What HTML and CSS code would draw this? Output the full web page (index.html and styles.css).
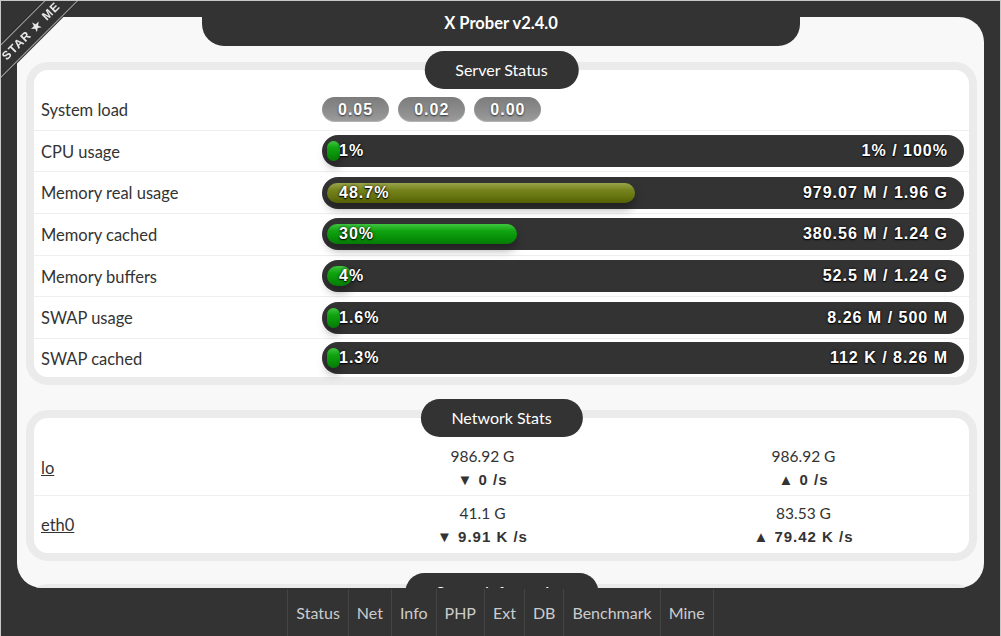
FILE: index.html
```html
<!DOCTYPE html>
<html lang="en">
<head>
<meta charset="utf-8">
<title>X Prober v2.4.0</title>
<link rel="stylesheet" href="styles.css">
</head>
<body>
<div class="ribbon"><div class="ribbon-band">STAR ★ ME</div></div>
<header class="app-title">X Prober v2.4.0</header>

<main class="main">
  <section class="card card-status">
    <h2 class="card-title">Server Status</h2>
    <div class="row">
      <div class="label">System load</div>
      <div class="value loads">
        <span class="load">0.05</span><span class="load">0.02</span><span class="load">0.00</span>
      </div>
    </div>
    <div class="row">
      <div class="label">CPU usage</div>
      <div class="value"><div class="bar"><div class="fill green" style="width:1%"></div><div class="bar-text"><span>1%</span><span>1% / 100%</span></div></div></div>
    </div>
    <div class="row">
      <div class="label">Memory real usage</div>
      <div class="value"><div class="bar"><div class="fill olive" style="width:48.7%"></div><div class="bar-text"><span>48.7%</span><span>979.07 M / 1.96 G</span></div></div></div>
    </div>
    <div class="row">
      <div class="label">Memory cached</div>
      <div class="value"><div class="bar"><div class="fill green" style="width:30%"></div><div class="bar-text"><span>30%</span><span>380.56 M / 1.24 G</span></div></div></div>
    </div>
    <div class="row">
      <div class="label">Memory buffers</div>
      <div class="value"><div class="bar"><div class="fill green" style="width:4%"></div><div class="bar-text"><span>4%</span><span>52.5 M / 1.24 G</span></div></div></div>
    </div>
    <div class="row">
      <div class="label">SWAP usage</div>
      <div class="value"><div class="bar"><div class="fill green" style="width:1.6%"></div><div class="bar-text"><span>1.6%</span><span>8.26 M / 500 M</span></div></div></div>
    </div>
    <div class="row">
      <div class="label">SWAP cached</div>
      <div class="value"><div class="bar"><div class="fill green" style="width:1.3%"></div><div class="bar-text"><span>1.3%</span><span>112 K / 8.26 M</span></div></div></div>
    </div>
  </section>

  <section class="card card-net">
    <h2 class="card-title">Network Stats</h2>
    <div class="row net-row">
      <div class="label"><a class="iface" href="#">lo</a></div>
      <div class="value net-values">
        <div class="net-col"><div class="net-total">986.92 G</div><div class="net-rate">▼ 0 /s</div></div>
        <div class="net-col"><div class="net-total">986.92 G</div><div class="net-rate">▲ 0 /s</div></div>
      </div>
    </div>
    <div class="row net-row">
      <div class="label"><a class="iface" href="#">eth0</a></div>
      <div class="value net-values">
        <div class="net-col"><div class="net-total">41.1 G</div><div class="net-rate">▼ 9.91 K /s</div></div>
        <div class="net-col"><div class="net-total">83.53 G</div><div class="net-rate">▲ 79.42 K /s</div></div>
      </div>
    </div>
  </section>

  <section class="card card-info">
    <h2 class="card-title">Server Information</h2>
    <div class="row"><div class="label">Server name</div><div class="value"></div></div>
  </section>
</main>

<nav class="nav">
  <a href="#">Status</a><a href="#">Net</a><a href="#">Info</a><a href="#">PHP</a><a href="#">Ext</a><a href="#">DB</a><a href="#">Benchmark</a><a href="#">Mine</a>
</nav>
</body>
</html>
```

FILE: styles.css
```css
* { box-sizing: border-box; }

html, body {
  margin: 0;
  height: 100%;
}

body {
  background: #333;
  font-family: Lato, "Noto Sans", sans-serif;
  font-size: 16px;
  color: #333;
  display: flex;
  flex-direction: column;
  overflow: hidden;
}

body::after {
  content: "";
  position: fixed;
  inset: 0;
  border: 1px solid #c8c8c8;
  border-bottom: 0;
  pointer-events: none;
  z-index: 20;
}

/* ribbon */
.ribbon {
  position: fixed;
  top: 0;
  left: 0;
  width: 100px;
  height: 100px;
  overflow: hidden;
  z-index: 10;
}

.ribbon-band {
  position: absolute;
  left: -40px;
  top: 19px;
  width: 142px;
  height: 24px;
  transform: rotate(-45deg);
  background: #333;
  border-top: 1px solid #a0a0a0;
  border-bottom: 1px solid #a0a0a0;
  box-shadow: 0 0 0 1px #2a2a2a;
  color: #e8e8e8;
  font-family: "Liberation Sans", Arial, sans-serif;
  font-weight: bold;
  font-size: 12px;
  letter-spacing: 1px;
  line-height: 22px;
  text-align: center;
}

/* title */
.app-title {
  position: fixed;
  top: 0;
  left: 202px;
  width: 598px;
  height: 46px;
  background: #333;
  color: #fff;
  border-radius: 0 0 22px 22px;
  font-weight: bold;
  font-size: 16.5px;
  line-height: 47px;
  text-align: center;
  z-index: 5;
}

/* main container */
.main {
  flex: 1;
  margin: 17px 17px 1px;
  background: #f8f8f8;
  border-radius: 25px;
  overflow: hidden;
  padding: 45px 7px 0 9px;
  min-height: 0;
}

.card {
  position: relative;
  background: #fff;
  border: 8px solid #ebebeb;
  border-radius: 22px;
  padding-top: 19px;
  margin-bottom: 25px;
}

.card-title {
  position: absolute;
  top: -19px;
  left: 50%;
  transform: translateX(-50%);
  margin: 0;
  height: 38px;
  padding: 0 31px;
  border-radius: 19px;
  background: #333;
  color: #fff;
  font-weight: normal;
  font-size: 16px;
  line-height: 38px;
  white-space: nowrap;
}

.row {
  display: grid;
  grid-template-columns: 281px 1fr;
  align-items: center;
  height: 41.7px;
  padding: 0 5px 0 7px;
  border-bottom: 1px solid #eee;
}

.card-status .row:last-child {
  height: 38px;
  border-bottom: 0;
}

.label {
  font-size: 16.5px;
  color: #333;
  padding-top: 1px;
}

/* load pills */
.loads {
  display: flex;
  gap: 9px;
  padding-top: 1px;
}

.load {
  height: 25px;
  padding: 0 16px;
  border-radius: 13px;
  background: linear-gradient(#7c7c7c, #8e8e8e 60%, #9d9d9d);
  box-shadow: inset 0 -1px 1px rgba(255,255,255,.25);
  color: #fff;
  font-family: "Liberation Sans", Arial, sans-serif;
  font-weight: bold;
  font-size: 16px;
  letter-spacing: 1px;
  line-height: 25px;
  text-shadow: 0 1px 2px rgba(0,0,0,.7);
}

/* progress bars */
.bar {
  display: grid;
  align-items: center;
  height: 32px;
  padding: 6px 5px;
  border-radius: 16px;
  background: #333;
}

.fill,
.bar-text {
  grid-area: 1 / 1;
}

.fill {
  height: 20px;
  min-width: 13px;
  border-radius: 10px;
  box-shadow: 0 6px 10px rgba(0,0,0,.35);
}

.fill.green {
  background: linear-gradient(#3fc43f, #0fa40f 35%, #089008 70%, #067a06);
}

.fill.olive {
  background: linear-gradient(#99a54a, #76841d 35%, #66740f 70%, #535f06);
}

.bar-text {
  display: flex;
  justify-content: space-between;
  padding: 0 11px 0 12px;
  color: #fff;
  font-family: "Liberation Sans", Arial, sans-serif;
  font-weight: bold;
  font-size: 16px;
  letter-spacing: 1px;
  line-height: 20px;
  text-shadow: 0 0 3px rgba(0,0,0,.9), 0 1px 1px #000;
  white-space: nowrap;
}

/* network */
.card-net {
  padding-top: 21px;
  margin-bottom: 23px;
}

.net-row {
  height: 57px;
}

.net-row:last-child {
  border-bottom: 0;
}

.iface {
  color: #333;
  text-decoration: underline;
}

.net-values {
  display: grid;
  grid-template-columns: 1fr 1fr;
  text-align: center;
}

.net-total {
  font-size: 15.5px;
  line-height: 24px;
  color: #333;
}

.net-rate {
  font-family: "Liberation Sans", Arial, sans-serif;
  font-weight: bold;
  font-size: 15px;
  letter-spacing: 1px;
  line-height: 23px;
  color: #333;
}

/* nav */
.nav {
  flex: 0 0 47px;
  display: flex;
  justify-content: center;
  background: #333;
}

.nav a {
  padding: 0 8px;
  border-left: 1px solid #444;
  color: #ccc;
  text-decoration: none;
  font-size: 16px;
  line-height: 47px;
}

.nav a:last-child {
  border-right: 1px solid #444;
}
```
